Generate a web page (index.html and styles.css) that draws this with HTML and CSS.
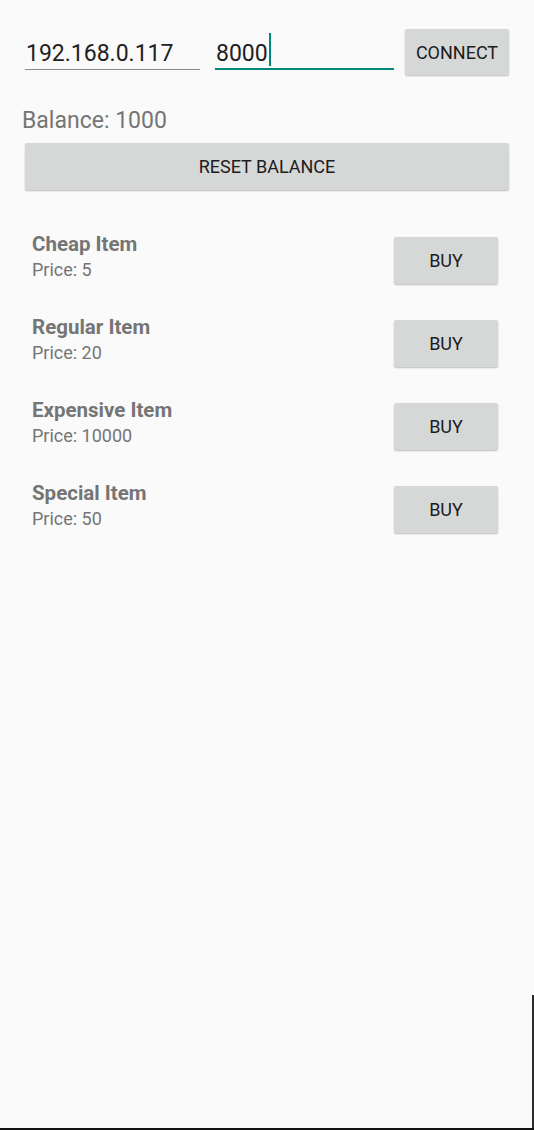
FILE: index.html
```html
<!DOCTYPE html>
<html>
<head>
<meta charset="utf-8">
<link rel="stylesheet" href="styles.css">
</head>
<body>
<div class="screen">
  <div class="conn-row">
    <div class="field ip"><span class="field-text">192.168.0.117</span></div>
    <div class="field port focused"><span class="field-text">8000</span><span class="caret"></span></div>
    <button class="btn connect">CONNECT</button>
  </div>
  <div class="balance">Balance: 1000</div>
  <button class="btn reset">RESET BALANCE</button>
  <div class="items">
    <div class="item">
      <div class="item-info"><div class="item-name">Cheap Item</div><div class="item-price">Price: 5</div></div>
      <button class="btn buy">BUY</button>
    </div>
    <div class="item">
      <div class="item-info"><div class="item-name">Regular Item</div><div class="item-price">Price: 20</div></div>
      <button class="btn buy">BUY</button>
    </div>
    <div class="item">
      <div class="item-info"><div class="item-name">Expensive Item</div><div class="item-price">Price: 10000</div></div>
      <button class="btn buy">BUY</button>
    </div>
    <div class="item">
      <div class="item-info"><div class="item-name">Special Item</div><div class="item-price">Price: 50</div></div>
      <button class="btn buy">BUY</button>
    </div>
  </div>
</div>
</body>
</html>
```

FILE: styles.css
```css
html, body {
  margin: 0;
  padding: 0;
  background: #fafafa;
}
body {
  font-family: Roboto, "Noto Sans", sans-serif;
  width: 534px;
  height: 1130px;
  overflow: hidden;
}
.screen {
  position: relative;
  height: 1130px;
  box-sizing: border-box;
  padding: 29px 25px 0 25px;
}
.screen::before {
  content: "";
  position: absolute;
  right: 0;
  top: 995px;
  bottom: 0;
  width: 2px;
  background: #2b2b2b;
}
.screen::after {
  content: "";
  position: absolute;
  left: 0;
  right: 0;
  bottom: 0;
  height: 2px;
  background: #111;
}
.conn-row {
  display: flex;
  align-items: flex-start;
  height: 46px;
}
.field {
  height: 41px;
  box-sizing: border-box;
  display: flex;
  align-items: flex-end;
  padding: 0 0 2px 1px;
  font-size: 23px;
  color: #212121;
  border-bottom: 1px solid #8a8a8a;
}
.ip { width: 175px; }
.port {
  width: 179px;
  margin-left: 15px;
  border-bottom: 2px solid #00897b;
  padding-bottom: 1px;
}
.field-text { line-height: 27px; }
.caret {
  width: 2px;
  height: 33px;
  background: #00897b;
  margin-left: 1px;
  margin-bottom: 1px;
}
.btn {
  font-family: Roboto, "Noto Sans", sans-serif;
  font-weight: 400;
  font-size: 18px;
  color: #1c1c1c;
  background: #d6d7d7;
  border: none;
  border-radius: 2px;
  box-shadow: 0 1px 2px rgba(0,0,0,0.18), 0 1px 1px rgba(0,0,0,0.08);
  height: 46px;
  padding: 0;
}
.connect {
  width: 104px;
  margin-left: 11px;
}
.balance {
  margin-top: 34px;
  margin-left: -3px;
  font-size: 23px;
  color: #757575;
  line-height: 24px;
}
.reset {
  display: block;
  width: 484px;
  margin-top: 10px;
  height: 47px;
}
.items {
  margin-top: 47px;
  padding: 0 11px 0 7px;
  display: flex;
  flex-direction: column;
  gap: 36px;
}
.item {
  display: flex;
  justify-content: space-between;
  align-items: flex-start;
  height: 47px;
}
.item-info {
  margin-top: -6px;
}
.item-name {
  font-size: 20.5px;
  font-weight: 700;
  color: #757575;
  line-height: 26px;
}
.item-price {
  font-size: 18px;
  color: #757575;
  line-height: 24px;
  margin-top: 1px;
}
.buy {
  width: 104px;
  height: 47px;
}
```
